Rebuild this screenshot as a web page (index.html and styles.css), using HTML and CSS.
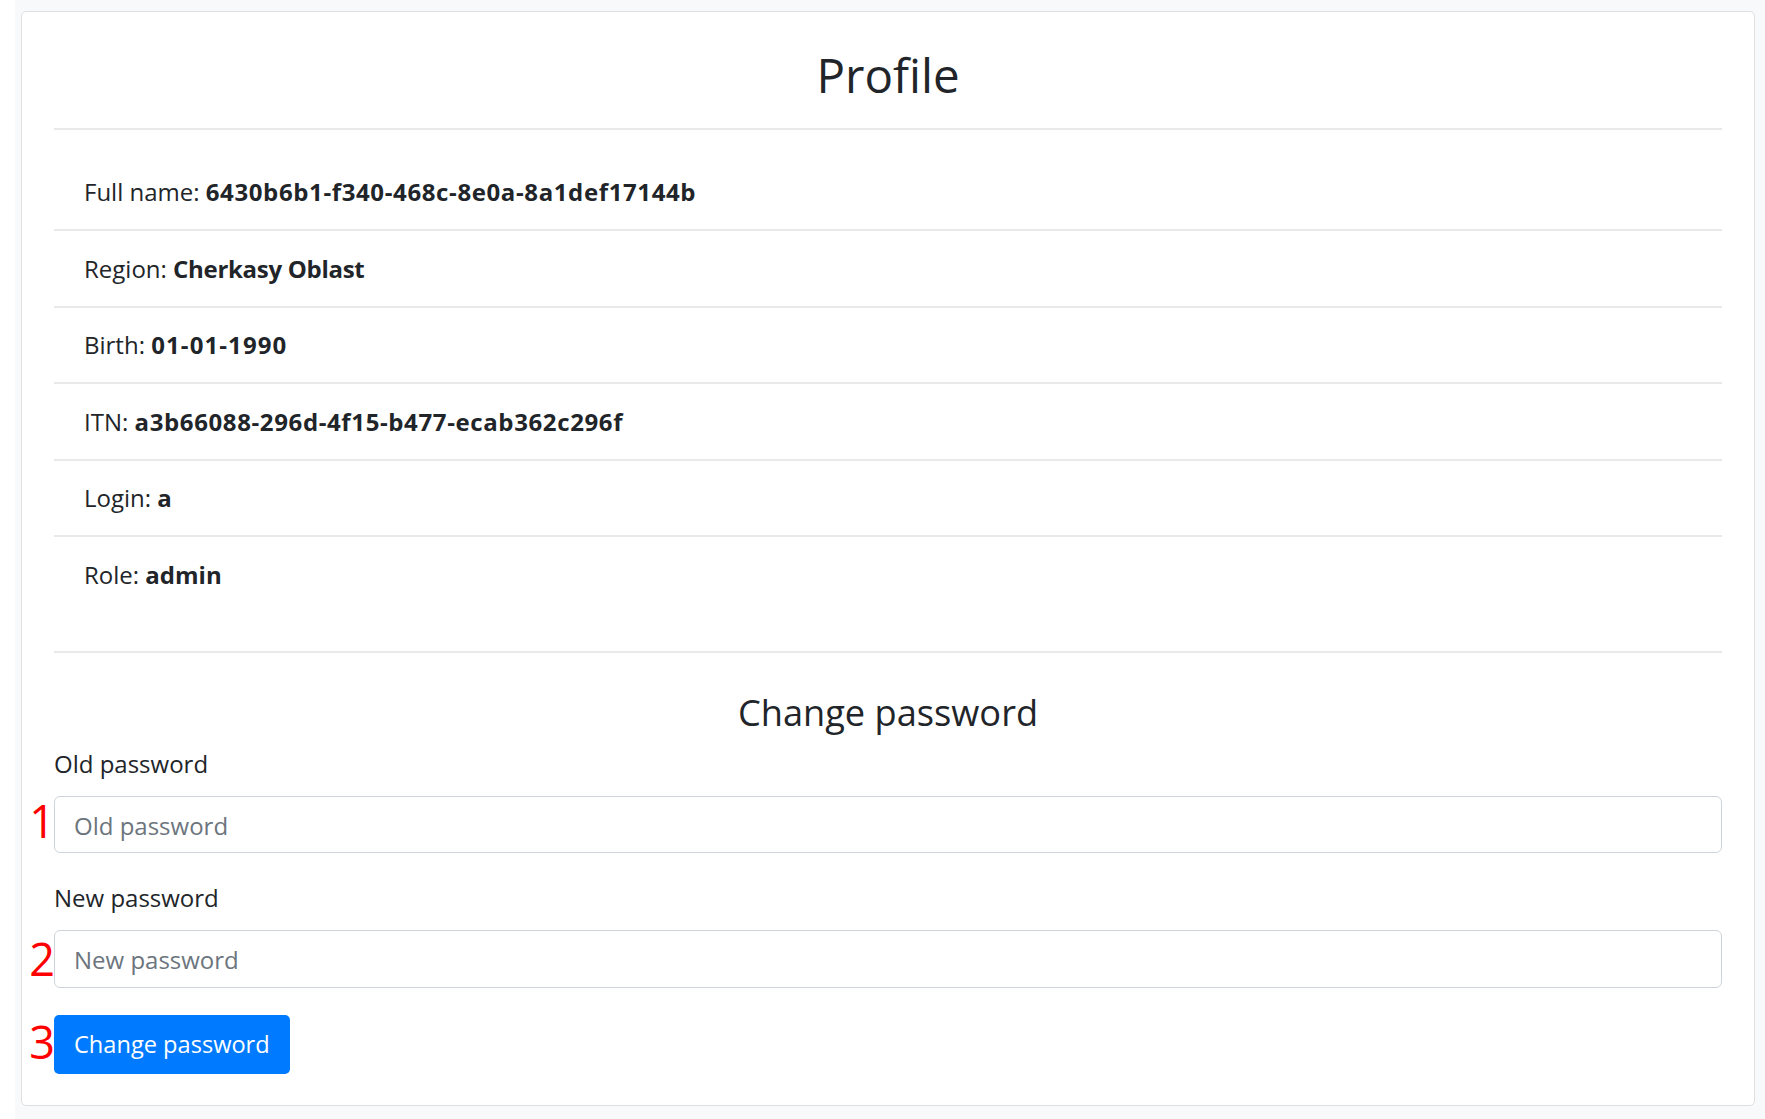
FILE: index.html
```html
<!DOCTYPE html>
<html lang="en">
<head>
<meta charset="utf-8">
<title>Profile</title>
<link rel="stylesheet" href="styles.css">
</head>
<body>
<div class="page">
  <div class="card">
    <h1 class="title">Profile</h1>
    <hr class="rule rule-top">
    <ul class="info">
      <li class="info-row">Full name: <b class="val-id">6430b6b1-f340-468c-8e0a-8a1def17144b</b></li>
      <li class="info-row">Region: <b class="val-text">Cherkasy Oblast</b></li>
      <li class="info-row">Birth: <b class="val-num">01-01-1990</b></li>
      <li class="info-row">ITN: <b class="val-id">a3b66088-296d-4f15-b477-ecab362c296f</b></li>
      <li class="info-row">Login: <b>a</b></li>
      <li class="info-row">Role: <b>admin</b></li>
    </ul>
    <hr class="rule rule-bottom">
    <h2 class="subtitle">Change password</h2>
    <form class="pw-form" onsubmit="return false">
      <div class="field">
        <label class="field-label" for="old">Old password</label>
        <div class="control-wrap">
          <span class="mark mark-1">1</span>
          <input id="old" class="control" type="password" placeholder="Old password">
        </div>
      </div>
      <div class="field">
        <label class="field-label" for="new">New password</label>
        <div class="control-wrap">
          <span class="mark mark-2">2</span>
          <input id="new" class="control" type="password" placeholder="New password">
        </div>
      </div>
      <div class="actions">
        <span class="mark mark-3">3</span>
        <button class="btn" type="submit">Change password</button>
      </div>
    </form>
  </div>
</div>
</body>
</html>
```

FILE: styles.css
```css
html, body {
  margin: 0;
  padding: 0;
  background: #ffffff;
  overflow: hidden;
}

body {
  font-family: "Open Sans", "Noto Sans", sans-serif;
  font-size: 24px;
  line-height: 36px;
  color: #212529;
}

.page {
  margin-left: 15px;
  background: #f8f9fa;
  padding: 11px 10px 14px 6px;
}

.card {
  background: #ffffff;
  border: 1px solid #dfdfdf;
  border-radius: 5px;
  padding: 34px 32px 31px 32px;
}

.title {
  margin: 0;
  font-size: 47.5px;
  line-height: 58px;
  font-weight: 400;
  text-align: center;
  color: #212529;
}

.rule {
  border: 0;
  height: 2px;
  background: #e9e9e9;
  margin: 0;
}

.rule-top {
  margin-top: 24px;
}

.info {
  list-style: none;
  margin: 24.5px 0 0 0;
  padding: 0;
}

.info-row {
  padding: 19.5px 30px 19px 30px;
  line-height: 36px;
  border-bottom: 2px solid #e9e9e9;
}

.info-row:last-child {
  border-bottom: 0;
}

.info-row b {
  font-weight: 700;
}

.val-id {
  letter-spacing: 0.62px;
}

.val-num {
  letter-spacing: 1.1px;
}

.val-text {
  letter-spacing: -0.3px;
}

.rule-bottom {
  margin-top: 39px;
}

.subtitle {
  margin: 38px 0 12px 0;
  font-size: 36.2px;
  line-height: 43px;
  font-weight: 400;
  text-align: center;
  color: #212529;
}

.pw-form {
  margin: 0;
}

.field {
  margin-bottom: 27px;
}

.field-label {
  display: block;
  line-height: 36px;
  margin-bottom: 14px;
}

.control-wrap {
  position: relative;
}

.control {
  display: block;
  box-sizing: border-box;
  width: 100%;
  height: 57.5px;
  margin: 0;
  border: 1px solid #ced4da;
  border-radius: 6px;
  padding: 2px 19px 0 19px;
  font-family: "Open Sans", "Noto Sans", sans-serif;
  font-size: 24px;
  color: #495057;
  background: #ffffff;
  outline: none;
}

.control::placeholder {
  color: #6c757d;
  opacity: 1;
}

.actions {
  position: relative;
  display: flex;
}

.btn {
  display: inline-block;
  margin: 0;
  border: 0;
  border-radius: 5px;
  background: #007bff;
  color: #ffffff;
  font-family: "Open Sans", "Noto Sans", sans-serif;
  font-size: 23.6px;
  line-height: 36px;
  padding: 11.5px 20px 11.5px 20px;
  cursor: pointer;
}

.mark {
  position: absolute;
  right: 100%;
  margin-right: -1px;
  font-family: "Open Sans", "Noto Sans", sans-serif;
  font-size: 45px;
  line-height: 44px;
  font-weight: 500;
  color: #ff0000;
}

.mark-1 { top: 3px; }
.mark-2 { top: 7px; }
.mark-3 { top: 5px; }
```
